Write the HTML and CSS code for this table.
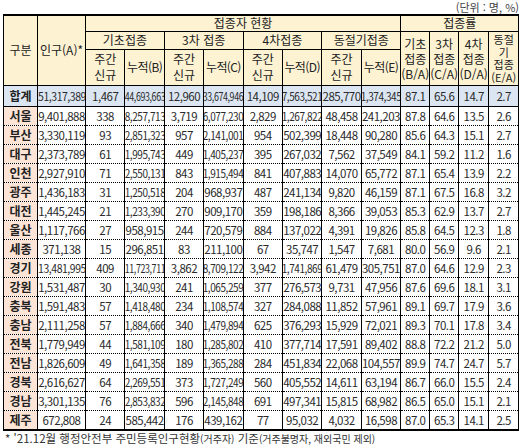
FILE: index.html
```html
<!DOCTYPE html>
<html lang="ko">
<head>
<meta charset="utf-8">
<link rel="stylesheet" href="styles.css">
</head>
<body>
<div class="page">
<div class="unit">(단위 : 명, %)</div>
<table class="tbl">
<colgroup>
<col class="w-name"><col class="w-pop">
<col class="w-n"><col class="w-n"><col class="w-n"><col class="w-n"><col class="w-n"><col class="w-n"><col class="w-n"><col class="w-n">
<col class="w-r"><col class="w-r"><col class="w-r2"><col class="w-r2">
</colgroup>
<thead>
<tr class="r1">
<th rowspan="3">구분</th>
<th rowspan="3">인구(A)*</th>
<th colspan="8">접종자 현황</th>
<th colspan="4">접종률</th>
</tr>
<tr class="r2">
<th colspan="2">기초접종</th>
<th colspan="2">3차 접종</th>
<th colspan="2">4차접종</th>
<th colspan="2">동절기접종</th>
<th rowspan="2" class="rate">기초<br>접종<br>(B/A)</th>
<th rowspan="2" class="rate">3차<br>접종<br>(C/A)</th>
<th rowspan="2" class="rate">4차<br>접종<br>(D/A)</th>
<th rowspan="2" class="rate tight">동절<br>기<br>접종<br>(E/A)</th>
</tr>
<tr class="r3">
<th class="two">주간<br>신규</th><th class="acc">누적(B)</th>
<th class="two">주간<br>신규</th><th class="acc">누적(C)</th>
<th class="two">주간<br>신규</th><th class="acc">누적(D)</th>
<th class="two">주간<br>신규</th><th class="acc">누적(E)</th>
</tr>
</thead>
<tbody>
<tr class="total"><td class="name">합계</td><td class="p8"><span>51,317,389</span></td><td>1,467</td><td class="c8"><span>44,693,663</span></td><td>12,960</td><td class="c8"><span>33,674,946</span></td><td>14,109</td><td class="c7"><span>7,563,521</span></td><td>285,770</td><td class="c7"><span>1,374,345</span></td><td>87.1</td><td>65.6</td><td>14.7</td><td>2.7</td></tr>
<tr><td class="name">서울</td><td>9,401,888</td><td>338</td><td class="c7"><span>8,257,713</span></td><td>3,719</td><td class="c7"><span>6,077,230</span></td><td>2,829</td><td class="c7"><span>1,267,822</span></td><td>48,458</td><td>241,203</td><td>87.8</td><td>64.6</td><td>13.5</td><td>2.6</td></tr>
<tr><td class="name">부산</td><td>3,330,119</td><td>93</td><td class="c7"><span>2,851,323</span></td><td>957</td><td class="c7"><span>2,141,001</span></td><td>954</td><td>502,399</td><td>18,448</td><td>90,280</td><td>85.6</td><td>64.3</td><td>15.1</td><td>2.7</td></tr>
<tr><td class="name">대구</td><td>2,373,789</td><td>61</td><td class="c7"><span>1,995,743</span></td><td>449</td><td class="c7"><span>1,405,237</span></td><td>395</td><td>267,032</td><td>7,562</td><td>37,549</td><td>84.1</td><td>59.2</td><td>11.2</td><td>1.6</td></tr>
<tr><td class="name">인천</td><td>2,927,910</td><td>71</td><td class="c7"><span>2,550,131</span></td><td>843</td><td class="c7"><span>1,915,494</span></td><td>841</td><td>407,883</td><td>14,070</td><td>65,772</td><td>87.1</td><td>65.4</td><td>13.9</td><td>2.2</td></tr>
<tr><td class="name">광주</td><td>1,436,183</td><td>31</td><td class="c7"><span>1,250,518</span></td><td>204</td><td>968,937</td><td>487</td><td>241,134</td><td>9,820</td><td>46,159</td><td>87.1</td><td>67.5</td><td>16.8</td><td>3.2</td></tr>
<tr><td class="name">대전</td><td>1,445,245</td><td>21</td><td class="c7"><span>1,233,390</span></td><td>270</td><td>909,170</td><td>359</td><td>198,186</td><td>8,366</td><td>39,053</td><td>85.3</td><td>62.9</td><td>13.7</td><td>2.7</td></tr>
<tr><td class="name">울산</td><td>1,117,766</td><td>27</td><td>958,915</td><td>244</td><td>720,579</td><td>884</td><td>137,022</td><td>4,391</td><td>19,826</td><td>85.8</td><td>64.5</td><td>12.3</td><td>1.8</td></tr>
<tr><td class="name">세종</td><td>371,138</td><td>15</td><td>296,851</td><td>83</td><td>211,100</td><td>67</td><td>35,747</td><td>1,547</td><td>7,681</td><td>80.0</td><td>56.9</td><td>9.6</td><td>2.1</td></tr>
<tr><td class="name">경기</td><td class="p8"><span>13,481,995</span></td><td>409</td><td class="c8"><span>11,723,711</span></td><td>3,862</td><td class="c7"><span>8,709,122</span></td><td>3,942</td><td class="c7"><span>1,741,869</span></td><td>61,479</td><td>305,751</td><td>87.0</td><td>64.6</td><td>12.9</td><td>2.3</td></tr>
<tr><td class="name">강원</td><td>1,531,487</td><td>30</td><td class="c7"><span>1,340,930</span></td><td>241</td><td class="c7"><span>1,065,259</span></td><td>377</td><td>276,573</td><td>9,731</td><td>47,956</td><td>87.6</td><td>69.6</td><td>18.1</td><td>3.1</td></tr>
<tr><td class="name">충북</td><td>1,591,483</td><td>57</td><td class="c7"><span>1,418,480</span></td><td>234</td><td class="c7"><span>1,108,574</span></td><td>327</td><td>284,088</td><td>11,852</td><td>57,961</td><td>89.1</td><td>69.7</td><td>17.9</td><td>3.6</td></tr>
<tr><td class="name">충남</td><td>2,111,258</td><td>57</td><td class="c7"><span>1,884,666</span></td><td>340</td><td class="c7"><span>1,479,894</span></td><td>625</td><td>376,293</td><td>15,929</td><td>72,021</td><td>89.3</td><td>70.1</td><td>17.8</td><td>3.4</td></tr>
<tr><td class="name">전북</td><td>1,779,949</td><td>44</td><td class="c7"><span>1,581,109</span></td><td>180</td><td class="c7"><span>1,285,802</span></td><td>410</td><td>377,714</td><td>17,591</td><td>89,402</td><td>88.8</td><td>72.2</td><td>21.2</td><td>5.0</td></tr>
<tr><td class="name">전남</td><td>1,826,609</td><td>49</td><td class="c7"><span>1,641,358</span></td><td>189</td><td class="c7"><span>1,365,288</span></td><td>284</td><td>451,834</td><td>22,068</td><td>104,557</td><td>89.9</td><td>74.7</td><td>24.7</td><td>5.7</td></tr>
<tr><td class="name">경북</td><td>2,616,627</td><td>64</td><td class="c7"><span>2,269,551</span></td><td>373</td><td class="c7"><span>1,727,249</span></td><td>560</td><td>405,552</td><td>14,611</td><td>63,194</td><td>86.7</td><td>66.0</td><td>15.5</td><td>2.4</td></tr>
<tr><td class="name">경남</td><td>3,301,135</td><td>76</td><td class="c7"><span>2,853,832</span></td><td>596</td><td class="c7"><span>2,145,848</span></td><td>691</td><td>497,341</td><td>15,815</td><td>68,982</td><td>86.5</td><td>65.0</td><td>15.1</td><td>2.1</td></tr>
<tr><td class="name">제주</td><td>672,808</td><td>24</td><td>585,442</td><td>176</td><td>439,162</td><td>77</td><td>95,032</td><td>4,032</td><td>16,598</td><td>87.0</td><td>65.3</td><td>14.1</td><td>2.5</td></tr>
</tbody>
</table>
<div class="note">* '21.12월 행정안전부 주민등록인구현황<small>(거주자)</small> 기준<small>(거주불명자, 재외국민 제외)</small></div>
</div>
</body>
</html>
```
FILE: styles.css
```css
html, body {
  margin: 0;
  padding: 0;
  background: #ffffff;
}
body {
  width: 522px;
  height: 448px;
  overflow: hidden;
  font-family: "Noto Sans CJK KR", "Malgun Gothic", sans-serif;
  color: #222222;
}
.page {
  width: 522px;
}
.unit {
  height: 14px;
  line-height: 14px;
  font-size: 11px;
  text-align: right;
  padding-right: 3px;
  color: #444444;
}
.tbl {
  border-collapse: collapse;
  table-layout: fixed;
  width: 516px;
  margin-left: 3px;
}
.w-name { width: 34px; }
.w-pop { width: 48px; }
.w-n { width: 39.4px; }
.w-r { width: 29px; }
.w-r2 { width: 30px; }

.tbl th,
.tbl td {
  padding: 0;
  text-align: center;
  vertical-align: middle;
  white-space: nowrap;
  overflow: hidden;
  border-left: 1px solid #000;
  border-right: 1px solid #000;
}
.tbl thead th {
  background: #fdf2d2;
  font-weight: normal;
  font-size: 12px;
  line-height: 14px;
  border: 1px solid #000;
  color: #222;
}
.tbl thead .r1 th {
  border-top: 2px solid #000;
}
.r1 { height: 16px; }
.r2 { height: 18px; }
.r3 { height: 36px; }
.tbl th.two {
  line-height: 16px;
}
.tbl th.acc {
  letter-spacing: -0.6px;
}
.tbl th.rate {
  line-height: 15px;
}
.tbl th.tight {
  font-size: 11px;
  line-height: 12.5px;
}
.tbl tbody td {
  font-size: 11.5px;
  letter-spacing: -0.5px;
  height: 18px;
  line-height: 18px;
  border-bottom: 1px dotted #000;
  color: #2a2a2a;
}
.tbl tbody tr.total td {
  background: #dce6f2;
  height: 20px;
  border-bottom: 1px solid #000;
}
.tbl tbody td.name {
  background: #fce4d6;
  font-weight: bold;
  font-size: 12px;
  letter-spacing: 0;
  color: #222;
}
.tbl tbody tr.total td.name {
  background: #dce6f2;
}
.tbl tbody tr:last-child td {
  border-bottom: 2px solid #000;
}
.tbl td.c7,
.tbl td.c8,
.tbl td.p8 {
  text-align: left;
}
.tbl td.c7 span,
.tbl td.c8 span,
.tbl td.p8 span {
  display: inline-block;
  margin-left: 50%;
  transform-origin: 0 50%;
}
.tbl td.c7 span { transform: scaleX(0.87) translateX(-50%); }
.tbl td.c8 span { transform: scaleX(0.77) translateX(-50%); }
.tbl td.p8 span { transform: scaleX(0.91) translateX(-50%); }
.note {
  font-size: 11.5px;
  line-height: 14px;
  padding-left: 5px;
  color: #333;
  white-space: nowrap;
}
.note small {
  font-size: 10px;
}
```
